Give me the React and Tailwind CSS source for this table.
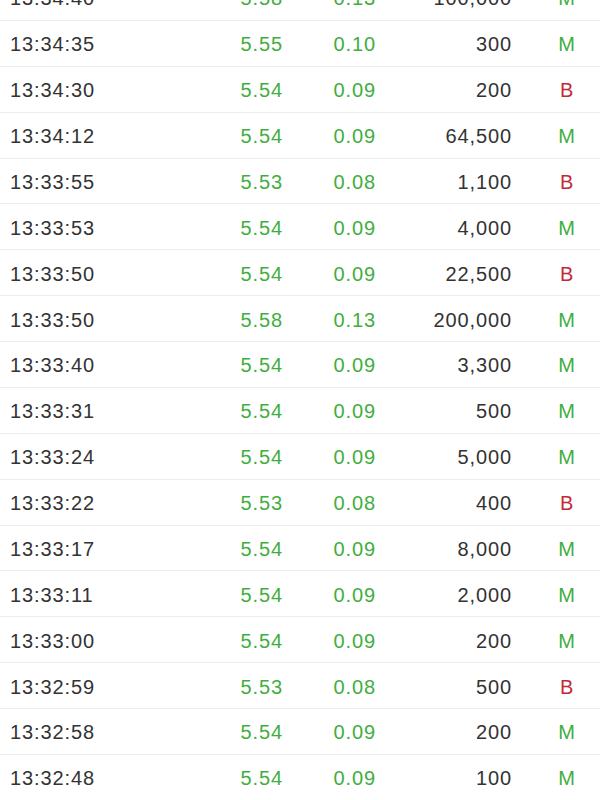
import React from 'react';

const trades = [
  ['13:34:40', '5.58', '0.13', '100,000', 'M'],
  ['13:34:35', '5.55', '0.10', '300', 'M'],
  ['13:34:30', '5.54', '0.09', '200', 'B'],
  ['13:34:12', '5.54', '0.09', '64,500', 'M'],
  ['13:33:55', '5.53', '0.08', '1,100', 'B'],
  ['13:33:53', '5.54', '0.09', '4,000', 'M'],
  ['13:33:50', '5.54', '0.09', '22,500', 'B'],
  ['13:33:50', '5.58', '0.13', '200,000', 'M'],
  ['13:33:40', '5.54', '0.09', '3,300', 'M'],
  ['13:33:31', '5.54', '0.09', '500', 'M'],
  ['13:33:24', '5.54', '0.09', '5,000', 'M'],
  ['13:33:22', '5.53', '0.08', '400', 'B'],
  ['13:33:17', '5.54', '0.09', '8,000', 'M'],
  ['13:33:11', '5.54', '0.09', '2,000', 'M'],
  ['13:33:00', '5.54', '0.09', '200', 'M'],
  ['13:32:59', '5.53', '0.08', '500', 'B'],
  ['13:32:58', '5.54', '0.09', '200', 'M'],
  ['13:32:48', '5.54', '0.09', '100', 'M'],
  ['13:32:40', '5.54', '0.09', '300', 'M'],
];

export default function App() {
  return (
    <div className="h-[800px] w-[600px] overflow-hidden bg-white font-['Liberation_Sans',Arial,sans-serif] text-[20px] tracking-[0.9px]">
      <div className="-mt-[25px] flex flex-col">
        {trades.map(([time, price, change, vol, side], i) => (
          <div key={i} className="flex h-[45.875px] shrink-0 items-center border-b border-[#ececec] pt-[2px]">
            <div className="flex w-[284px] justify-between pl-[10px] pr-px">
              <span className="text-[#333]">{time}</span>
              <span className="text-[#3fae3f]">{price}</span>
            </div>
            <div className="w-[92px] text-right text-[#3fae3f]">{change}</div>
            <div className="w-[136px] text-right text-[#333]">{vol}</div>
            <div
              className={
                side === 'B'
                  ? 'flex-1 pl-[22px] text-center text-[#c22a3a]'
                  : 'flex-1 pl-[22px] text-center text-[#3fae3f]'
              }
            >
              {side}
            </div>
          </div>
        ))}
      </div>
    </div>
  );
}
